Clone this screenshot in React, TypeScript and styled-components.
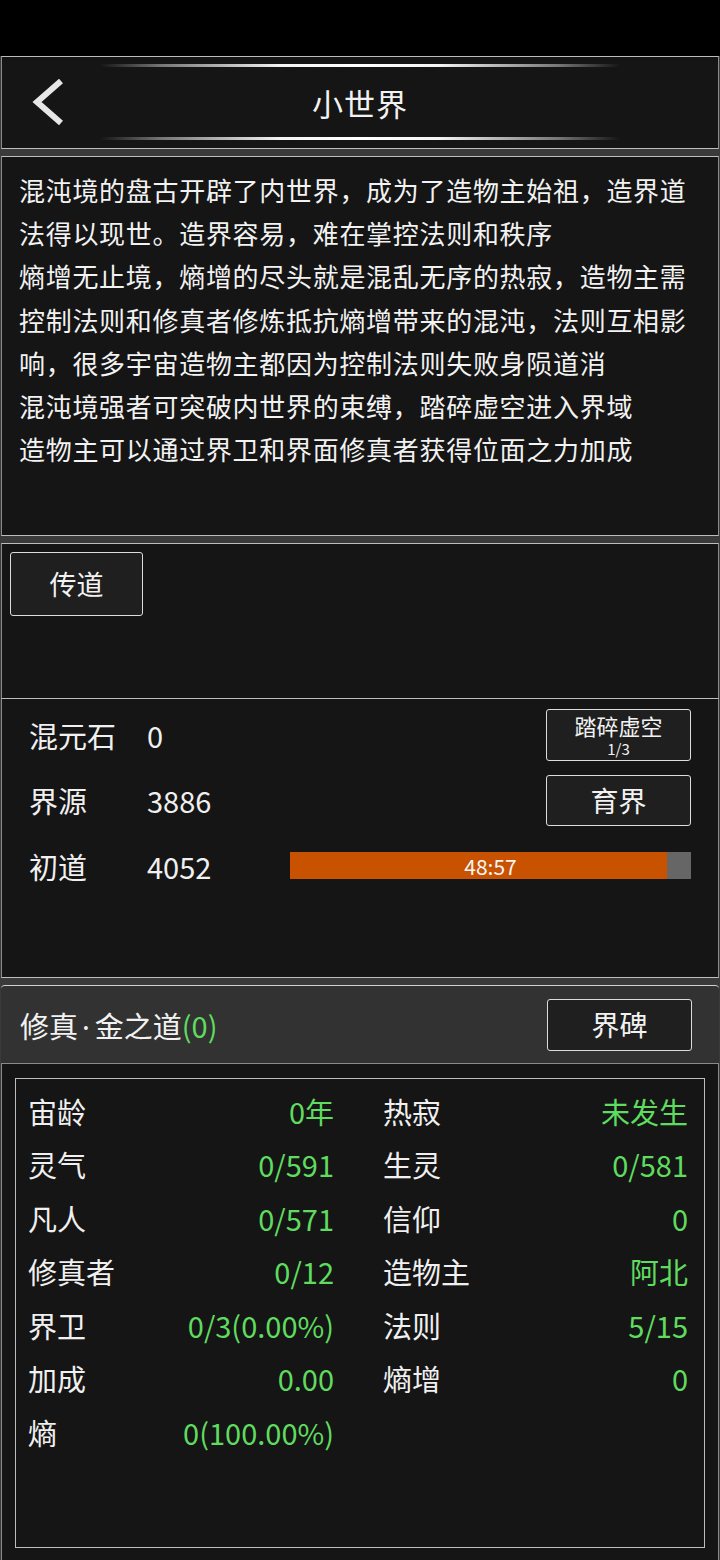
import styled, { createGlobalStyle } from "styled-components";

const GlobalStyle = createGlobalStyle`
  html, body {
    margin: 0;
    padding: 0;
    background: #000;
  }
  body {
    font-family: "Noto Sans CJK SC", "Noto Sans", sans-serif;
    color: #f0f0f0;
  }
`;

const Screen = styled.div`
  width: 720px;
  min-height: 1560px;
  background: #000;
  display: flex;
  flex-direction: column;
`;

const StatusBar = styled.div`
  height: 56px;
  background: #000;
`;

const Frame = styled.div`
  background: #3a3a3a;
  display: flex;
  flex-direction: column;
  gap: 7px;
`;

const Panel = styled.section<{ $h: number }>`
  box-sizing: border-box;
  height: ${(p) => p.$h}px;
  margin: 0 1px;
  background: #151515;
  border: 1px solid #bdbdbd;
  border-left-color: #8a8a8a;
  border-right-color: #8a8a8a;
`;

const Header = styled(Panel)`
  display: flex;
  flex-direction: column;
  align-items: center;
  padding-top: 7px;
`;

const GlowLine = styled.div`
  width: 520px;
  height: 3px;
  background: linear-gradient(
    90deg,
    rgba(255, 255, 255, 0) 0%,
    rgba(200, 200, 200, 0.55) 12%,
    #f4f4f4 35%,
    #ffffff 50%,
    #f4f4f4 65%,
    rgba(200, 200, 200, 0.55) 88%,
    rgba(255, 255, 255, 0) 100%
  );
`;

const TitleRow = styled.div`
  width: 100%;
  height: 70px;
  display: grid;
  grid-template-columns: 90px 1fr 90px;
  align-items: center;
`;

const BackButton = styled.div`
  padding-left: 27px;
  display: flex;
  align-items: center;
`;

const Title = styled.h1`
  margin: 0;
  text-align: center;
  font-size: 31px;
  font-weight: 400;
  color: #f2f2f2;
  letter-spacing: 1px;
`;

const Lore = styled(Panel)`
  padding: 11px 17px 0 17px;
`;

const LoreLine = styled.p`
  margin: 0;
  font-size: 26px;
  letter-spacing: 0.7px;
  line-height: 43.2px;
  color: #f2f2f2;
`;

const Block = styled.div`
  display: flex;
  flex-direction: column;
`;

const ActionPanel = styled(Panel)`
  border-bottom: none;
  padding: 8px 0 0 8px;
`;

const GameButton = styled.button<{ $w: number; $h: number; $size: number }>`
  box-sizing: border-box;
  width: ${(p) => p.$w}px;
  height: ${(p) => p.$h}px;
  background: #1f1f1f;
  border: 1.5px solid #dcdcdc;
  border-radius: 3px;
  color: #f2f2f2;
  font-family: inherit;
  font-size: ${(p) => p.$size}px;
  line-height: 1.05;
  padding: 0;
  display: flex;
  flex-direction: column;
  align-items: center;
  justify-content: center;
`;

const ButtonMain = styled.span`
  line-height: 1;
`;

const Small = styled.span`
  font-size: 15px;
  line-height: 1;
  margin-top: 5px;
`;

const ResourcePanel = styled(Panel)`
  padding: 3px 27px 0 27px;
`;

const ResRow = styled.div`
  height: 65.5px;
  display: flex;
  align-items: center;
  font-size: 29px;
`;

const ResLabel = styled.span`
  width: 118px;
`;

const ResValue = styled.span<{ $w?: number }>`
  width: ${(p) => (p.$w ? `${p.$w}px` : "auto")};
  flex: ${(p) => (p.$w ? "none" : "1")};
`;

const Bar = styled.div`
  flex: 1;
  height: 27px;
  background: #666;
  position: relative;
  display: flex;
  align-items: center;
  justify-content: center;
`;

const BarFill = styled.div`
  position: absolute;
  left: 0;
  top: 0;
  bottom: 0;
  background: #c85200;
`;

const BarText = styled.span`
  position: relative;
  font-size: 21px;
  color: #f5f5f5;
`;

const PathHeader = styled.div`
  box-sizing: border-box;
  height: 79px;
  margin: 0 1px;
  background: #323232;
  border-top: 1px solid #d0d0d0;
  border-bottom: 1px solid #8a8a8a;
  border-radius: 4px 4px 0 0;
  display: flex;
  align-items: center;
  justify-content: space-between;
  padding: 0 27px 0 19px;
`;

const PathTitle = styled.span`
  font-size: 29px;
  color: #f2f2f2;
`;

const Dot = styled.span`
  font-family: "Noto Sans", sans-serif;
  margin: 0 5px 0 4px;
`;

const Green = styled.span`
  color: #5fdc5f;
`;

const StatsPanel = styled.section`
  box-sizing: border-box;
  height: 497px;
  margin: 0 1px;
  background: #151515;
  border: 1px solid #8a8a8a;
  border-top: none;
  padding: 14px 13px 0 13px;
`;

const StatsBox = styled.div`
  box-sizing: border-box;
  height: 470px;
  border: 1.5px solid #bdbdbd;
  padding: 5px 18px 0 12px;
  display: grid;
  grid-template-columns: 306px 305px;
  column-gap: 49px;
  grid-auto-rows: 53.5px;
  align-content: start;
`;

const Stat = styled.div`
  display: flex;
  align-items: center;
  justify-content: space-between;
  font-size: 29px;
`;

const StatLabel = styled.span`
  color: #f0f0f0;
`;

const StatValue = styled.span`
  color: #5fdc5f;
`;

const lore = [
  "混沌境的盘古开辟了内世界，成为了造物主始祖，造界道",
  "法得以现世。造界容易，难在掌控法则和秩序",
  "熵增无止境，熵增的尽头就是混乱无序的热寂，造物主需",
  "控制法则和修真者修炼抵抗熵增带来的混沌，法则互相影",
  "响，很多宇宙造物主都因为控制法则失败身陨道消",
  "混沌境强者可突破内世界的束缚，踏碎虚空进入界域",
  "造物主可以通过界卫和界面修真者获得位面之力加成",
];

const stats: [string, string][] = [
  ["宙龄", "0年"],
  ["热寂", "未发生"],
  ["灵气", "0/591"],
  ["生灵", "0/581"],
  ["凡人", "0/571"],
  ["信仰", "0"],
  ["修真者", "0/12"],
  ["造物主", "阿北"],
  ["界卫", "0/3(0.00%)"],
  ["法则", "5/15"],
  ["加成", "0.00"],
  ["熵增", "0"],
  ["熵", "0(100.00%)"],
];

export default function App() {
  const progress = 94;
  return (
    <Screen>
      <GlobalStyle />
      <StatusBar />
      <Frame>
        <Header $h={93}>
          <GlowLine />
          <TitleRow>
            <BackButton>
              <svg width="36" height="48" viewBox="0 0 36 48">
                <polyline
                  points="32,3 8,24 32,45"
                  fill="none"
                  stroke="#e6e6e6"
                  strokeWidth="6"
                  strokeLinejoin="miter"
                />
              </svg>
            </BackButton>
            <Title>小世界</Title>
            <span />
          </TitleRow>
          <GlowLine />
        </Header>

        <Lore $h={380}>
          {lore.map((l) => (
            <LoreLine key={l}>{l}</LoreLine>
          ))}
        </Lore>

        <Block>
          <ActionPanel $h={155}>
            <GameButton $w={133} $h={64} $size={27}>
              传道
            </GameButton>
          </ActionPanel>
          <ResourcePanel $h={280}>
            <ResRow>
              <ResLabel>混元石</ResLabel>
              <ResValue>0</ResValue>
              <GameButton $w={145} $h={52} $size={22}>
                <ButtonMain>踏碎虚空</ButtonMain>
                <Small>1/3</Small>
              </GameButton>
            </ResRow>
            <ResRow>
              <ResLabel>界源</ResLabel>
              <ResValue>3886</ResValue>
              <GameButton $w={145} $h={51} $size={28}>
                育界
              </GameButton>
            </ResRow>
            <ResRow>
              <ResLabel>初道</ResLabel>
              <ResValue $w={143}>4052</ResValue>
              <Bar>
                <BarFill style={{ width: `${progress}%` }} />
                <BarText>48:57</BarText>
              </Bar>
            </ResRow>
          </ResourcePanel>
        </Block>

        <Block>
          <PathHeader>
            <PathTitle>
              修真<Dot>·</Dot>金之道<Green>(0)</Green>
            </PathTitle>
            <GameButton $w={145} $h={52} $size={28}>
              界碑
            </GameButton>
          </PathHeader>
          <StatsPanel>
            <StatsBox>
              {stats.map(([k, v]) => (
                <Stat key={k}>
                  <StatLabel>{k}</StatLabel>
                  <StatValue>{v}</StatValue>
                </Stat>
              ))}
            </StatsBox>
          </StatsPanel>
        </Block>
      </Frame>
    </Screen>
  );
}
